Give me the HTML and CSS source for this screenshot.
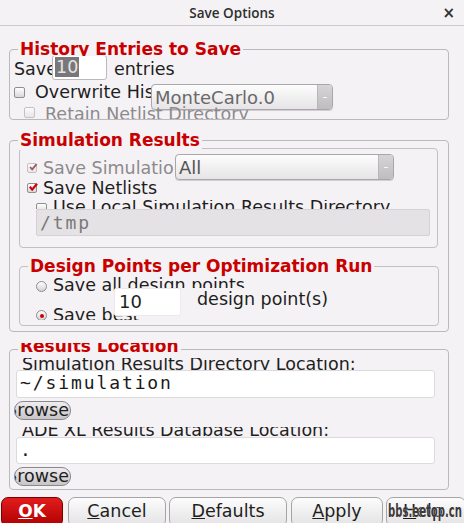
FILE: index.html
```html
<!DOCTYPE html>
<html>
<head>
<meta charset="utf-8">
<title>Save Options</title>
<link rel="stylesheet" href="styles.css">
</head>
<body>
<div class="titlebar">
  <span></span>
  <span class="title">Save Options</span>
  <span class="close">×</span>
</div>
<div class="main">
  <div class="group g1">
    <div class="gtitle t1">History Entries to Save</div>
    <div class="gbody b1">
      <div class="row r-save">
        <span class="lbl save-lbl">Save</span>
        <span class="spin"><span class="sel">10</span></span>
        <span class="lbl entries">entries</span>
      </div>
      <div class="row r-over">
        <span class="cb"></span>
        <span class="lbl over-lbl">Overwrite History</span>
        <span class="combo c1"><span class="ctext">MonteCarlo.0</span><span class="cbtn"></span></span>
      </div>
      <div class="row r-retain">
        <span class="cb dis"></span>
        <span class="lbl dis retain-lbl">Retain Netlist Directory</span>
      </div>
    </div>
  </div>

  <div class="group g2">
    <div class="gtitle t2">Simulation Results</div>
    <div class="sub sub1">
      <div class="row ra">
        <span class="cb dis chk"><svg width="10" height="10" viewBox="0 0 10 10"><path d="M2 5 L4.2 7.4 L8.6 2.2" fill="none" stroke="#9a5a5a" stroke-width="1.8"/></svg></span>
        <span class="lbl dis sim-lbl">Save Simulation Data</span>
        <span class="combo c2"><span class="ctext dark">All</span><span class="cbtn"></span></span>
      </div>
      <div class="row rb">
        <span class="cb chk"><svg width="10" height="10" viewBox="0 0 10 10"><path d="M1.8 4.8 L4.2 7.6 L9 1.8" fill="none" stroke="#d00000" stroke-width="2.2"/></svg></span>
        <span class="lbl netl-lbl">Save Netlists</span>
      </div>
      <div class="row rc">
        <span class="cb"></span>
        <span class="lbl local-lbl">Use Local Simulation Results Directory</span>
      </div>
      <div class="field fd">/tmp</div>
    </div>

    <div class="sub sub2">
      <div class="gtitle t3">Design Points per Optimization Run</div>
      <div class="row d1">
        <span class="rb"></span>
        <span class="lbl dp-lbl">Save all design points</span>
      </div>
      <div class="row d2">
        <span class="numbox">10</span>
        <span class="lbl dp-unit">design point(s)</span>
      </div>
      <div class="row d3">
        <span class="rb on"></span>
        <span class="lbl dp-lbl">Save best</span>
      </div>
    </div>
  </div>

  <div class="group g3">
    <div class="gtitle t4"><span>Results Location</span></div>
    <div class="cliplbl l1"><span>Simulation Results Directory Location:</span></div>
    <div class="field fw f1">~/simulation</div>
    <div class="browse"><span>Browse</span></div>
    <div class="cliplbl l2"><span>ADE XL Results Database Location:</span></div>
    <div class="field fw f2">.</div>
    <div class="browse"><span>Browse</span></div>
  </div>

  <div class="buttons">
    <div class="btn ok"><u>O</u>K</div>
    <div class="btn cancel"><u>C</u>ancel</div>
    <div class="btn defaults"><u>D</u>efaults</div>
    <div class="btn apply"><u>A</u>pply</div>
    <div class="btn help"><u>H</u>elp<span class="wm">bbs.eetop.cn</span></div>
  </div>
</div>
</body>
</html>
```

FILE: styles.css
```css
html, body {
  margin: 0;
  padding: 0;
}
body {
  width: 464px;
  height: 523px;
  overflow: hidden;
  background: #f5f2f5;
  font-family: "DejaVu Sans", sans-serif;
  font-size: 17.5px;
  color: #1e1e1e;
}

/* title bar */
.titlebar {
  height: 25px;
  border-bottom: 1px solid #cdcacd;
  background: #f4f2f4;
  display: grid;
  grid-template-columns: 1fr auto 1fr;
  align-items: center;
}
.title {
  font-family: "Open Sans", "DejaVu Sans", sans-serif;
  font-weight: 600;
  font-size: 13.5px;
  color: #2e2e2e;
}
.close {
  justify-self: end;
  padding-right: 9px;
  font-size: 15px;
  font-weight: bold;
  color: #333;
}

.main {
  padding: 0 15px 0 9px;
}

/* group frames */
.group {
  position: relative;
  box-sizing: border-box;
  border: 1px solid #bcb9bc;
  border-radius: 4px;
}
.gtitle {
  position: absolute;
  left: 8px;
  padding: 0 2px;
  background: #f5f2f5;
  color: #c80000;
  font-weight: bold;
  font-size: 17px;
  line-height: 20px;
  white-space: nowrap;
  overflow: hidden;
  z-index: 2;
}
.lbl {
  line-height: 20px;
  white-space: nowrap;
  overflow: hidden;
  flex: none;
}
.dis {
  color: #8c8a8c;
}
.row {
  display: flex;
  align-items: flex-start;
}

/* group 1 */
.g1 {
  margin-top: 23px;
  height: 71px;
}
.t1 {
  top: -11px;
  height: 17px;
}
.b1 {
  height: 69px;
  overflow: hidden;
}
.r-save {
  margin-top: 4px;
  height: 26px;
  padding-left: 4px;
}
.save-lbl {
  width: 38px;
  margin-top: 5px;
}
.spin {
  box-sizing: border-box;
  width: 55px;
  height: 25px;
  margin-top: 1px;
  border: 1px solid #bcb9bc;
  border-radius: 3px;
  background: #fff;
  padding: 1px 0 0 2px;
  flex: none;
}
.sel {
  display: inline-block;
  background: #797779;
  color: #e4e4e4;
  line-height: 20px;
  padding: 0 1px;
}
.entries {
  margin-left: 7px;
  margin-top: 5px;
}
.r-over {
  height: 24px;
  padding-left: 4px;
}
.r-over .cb {
  margin-top: 7px;
}
.over-lbl {
  margin-left: 10px;
  width: 116px;
  margin-top: 2px;
}
.c1 {
  margin-top: 4px;
  width: 182px;
}
.r-retain {
  padding-left: 14px;
}
.r-retain .cb {
  margin-top: 3px;
}
.retain-lbl {
  margin-left: 10px;
}

/* checkbox / radio */
.cb {
  box-sizing: border-box;
  width: 11px;
  height: 11px;
  border: 1px solid #908e90;
  border-radius: 2px;
  background: linear-gradient(#ffffff, #d9d7d9);
  flex: none;
  position: relative;
}
.cb.dis {
  border-color: #c4c2c4;
  background: linear-gradient(#fbfbfb, #e8e6e8);
}
.cb.chk svg {
  position: absolute;
  left: 0;
  top: -2px;
}
.rb {
  box-sizing: border-box;
  width: 11px;
  height: 11px;
  border: 1px solid #8e8c8e;
  border-radius: 50%;
  background: linear-gradient(#ffffff, #d4d2d4);
  flex: none;
  display: flex;
  align-items: center;
  justify-content: center;
}
.rb.on::after {
  content: "";
  width: 4px;
  height: 4px;
  border-radius: 50%;
  background: #d00000;
}

/* combo */
.combo {
  box-sizing: border-box;
  height: 26px;
  border: 1px solid #a9a7a9;
  border-radius: 4px;
  background: linear-gradient(#fdfdfd, #e6e4e6);
  box-shadow: 0 1px 0 #d0ced0;
  display: flex;
  flex: none;
  overflow: hidden;
}
.ctext {
  flex: 1;
  padding: 1px 0 0 3px;
  font-size: 18px;
  line-height: 23px;
  color: #6a686a;
}
.ctext.dark {
  color: #555;
}
.cbtn {
  width: 14px;
  background: linear-gradient(#d6d4d6, #bfbdbf);
  border-left: 1px solid #b8b6b8;
  display: flex;
  align-items: center;
  justify-content: center;
}
.cbtn::after {
  content: "";
  width: 4px;
  height: 1px;
  background: #f4f4f4;
}

/* group 2 */
.g2 {
  margin-top: 20px;
  height: 192px;
}
.t2 {
  top: -11px;
  height: 20px;
}
.sub {
  position: relative;
  box-sizing: border-box;
  border: 1px solid #c3c0c3;
  border-radius: 4px;
}
.sub1 {
  margin: 7px 0 0 9px;
  width: 419px;
  height: 100px;
}
.ra {
  margin-top: 5px;
  height: 24px;
  padding-left: 7px;
}
.ra .cb {
  margin-top: 9px;
  width: 10px;
  height: 10px;
}
.sim-lbl {
  margin-left: 6px;
  width: 132px;
  margin-top: 4px;
}
.c2 {
  width: 219px;
}
.sub1 .rb {
  height: 22px;
  padding-left: 7px;
  width: auto;
  border: 0;
  border-radius: 0;
  background: none;
  align-items: flex-start;
  justify-content: flex-start;
}
.sub1 .rb .cb {
  margin-top: 5px;
  width: 10px;
  height: 10px;
}
.netl-lbl {
  margin-left: 6px;
}
.rc {
  height: 9px;
  overflow: hidden;
  padding-left: 16px;
}
.rc .cb {
  margin-top: 3px;
}
.local-lbl {
  margin-left: 6px;
  margin-top: -3px;
}
.field {
  box-sizing: border-box;
  font-family: "DejaVu Sans Mono", monospace;
  font-size: 18px;
  letter-spacing: 1.9px;
  white-space: nowrap;
  overflow: hidden;
  padding-left: 3px;
}
.fd {
  margin-left: 16px;
  width: 394px;
  height: 27px;
  line-height: 25px;
  background: #e4e2e4;
  border: 1px solid #d4d2d4;
  border-radius: 2px;
  color: #7a787a;
}

.sub2 {
  margin: 18px 0 0 9px;
  width: 420px;
  height: 60px;
}
.t3 {
  top: -11px;
  height: 20px;
}
.d1 {
  margin-top: 9px;
  height: 12px;
  padding-left: 16px;
}
.d1 .rb {
  margin-top: 5px;
}
.dp-lbl {
  margin-left: 6px;
  margin-top: -1px;
}
.d2 {
  height: 17px;
  padding-left: 94px;
  position: relative;
}
.numbox {
  box-sizing: border-box;
  width: 67px;
  height: 28px;
  background: #fff;
  border: 1px solid #ebe9eb;
  border-radius: 2px;
  padding-left: 4px;
  line-height: 25px;
  font-size: 18px;
  flex: none;
}
.dp-unit {
  flex: 1;
  height: 22px;
  padding-left: 16px;
  background: #f5f2f5;
  line-height: 22px;
  margin-right: 2px;
}
.d3 {
  height: 15px;
  overflow: hidden;
  padding-left: 16px;
}
.d3 .rb {
  margin-top: 5px;
}
.d3 .dp-lbl {
  margin-top: 0;
}

/* group 3 */
.g3 {
  margin-top: 17px;
  height: 141px;
}
.t4 {
  top: -7px;
  height: 14px;
}
.t4 span {
  display: block;
  margin-top: -7px;
}
.cliplbl {
  overflow: hidden;
  white-space: nowrap;
  padding-left: 12px;
  line-height: 20px;
}
.cliplbl span {
  display: block;
}
.l1 {
  margin-top: 8px;
  height: 12px;
}
.l1 span {
  margin-top: -4px;
}
.l2 {
  margin-top: 7px;
  height: 10px;
}
.l2 span {
  margin-top: -7px;
}
.fw {
  position: relative;
  margin-left: 6px;
  width: 419px;
  background: #fff;
  border: 1px solid #dcdadc;
  border-radius: 3px;
  color: #1a1a1a;
  line-height: 24px;
}
.f1 {
  height: 28px;
}
.f2 {
  height: 27px;
}
.browse {
  box-sizing: border-box;
  margin: 3px 0 0 4px;
  width: 57px;
  height: 19px;
  border: 1px solid #8a888a;
  border-radius: 9px;
  background: linear-gradient(#efedef, #c6c4c6);
  overflow: hidden;
  display: flex;
  justify-content: flex-end;
  padding-right: 1px;
  line-height: 17px;
  white-space: nowrap;
}
.browse span {
  flex: none;
}

/* bottom buttons */
.buttons {
  display: flex;
  margin: 7px 0 0 -8px;
  width: 470px;
}
.btn {
  box-sizing: border-box;
  height: 30px;
  flex: none;
  border: 1px solid #a6a4a6;
  border-radius: 7px;
  background: linear-gradient(#fcfcfc, #e4e2e4);
  text-align: center;
  padding-top: 3px;
  line-height: 20px;
  white-space: nowrap;
  position: relative;
}
.ok {
  width: 62px;
  background: linear-gradient(#e21c1c, #b00000);
  border-color: #7a0000;
  color: #fff;
  font-weight: bold;
  font-size: 17px;
}
.cancel {
  width: 98px;
  margin-left: 5px;
}
.defaults {
  width: 118px;
  margin-left: 3px;
}
.apply {
  width: 92px;
  margin-left: 4px;
}
.help {
  width: 80px;
  margin-left: 3px;
  text-align: left;
  padding-left: 16px;
}
.wm {
  position: absolute;
  left: 1px;
  top: 3px;
  font-family: "DejaVu Sans Condensed", "DejaVu Sans", sans-serif;
  font-weight: bold;
  font-size: 17px;
  line-height: 20px;
  color: #3a3a3a;
  text-shadow: 0 0 1px #fff;
  transform: scaleX(0.66);
  transform-origin: left center;
}
```
